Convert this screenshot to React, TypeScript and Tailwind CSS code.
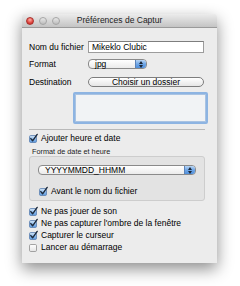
import React from "react";

const font = { fontFamily: '"Liberation Sans", Arial, sans-serif' };

function CheckBox({ checked }: { checked: boolean }) {
  return (
    <svg width="9" height="9" viewBox="0 0 9 9" className="shrink-0 overflow-visible">
      <defs>
        <linearGradient id="cbBlue" x1="0" y1="0" x2="0" y2="1">
          <stop offset="0" stopColor="#d4e6f8" />
          <stop offset="0.5" stopColor="#8fbbea" />
          <stop offset="1" stopColor="#5d9ae0" />
        </linearGradient>
        <linearGradient id="cbWhite" x1="0" y1="0" x2="0" y2="1">
          <stop offset="0" stopColor="#ffffff" />
          <stop offset="1" stopColor="#e4e4e4" />
        </linearGradient>
      </defs>
      <rect
        x="0.5"
        y="1.5"
        width="7"
        height="7"
        rx="1.2"
        fill={checked ? "url(#cbBlue)" : "url(#cbWhite)"}
        stroke={checked ? "#5a7fae" : "#8e8e8e"}
        strokeWidth="0.8"
      />
      {checked && (
        <path d="M1.8 4.6 L3.6 6.8 L8.2 0.4" fill="none" stroke="#1d2a3c" strokeWidth="1.4" strokeLinecap="round" strokeLinejoin="round" />
      )}
    </svg>
  );
}

function Stepper() {
  return (
    <div className="flex h-full w-[11px] shrink-0 flex-col items-center justify-center gap-[1px] rounded-r-[3px] border-l border-[#5b83b9] bg-gradient-to-b from-[#b9d5f3] via-[#6fa6e6] to-[#4f8fdc]">
      <svg width="4" height="3" viewBox="0 0 4 3">
        <path d="M0 3 L2 0 L4 3 Z" fill="#1a2637" />
      </svg>
      <svg width="4" height="3" viewBox="0 0 4 3">
        <path d="M0 0 L2 3 L4 0 Z" fill="#1a2637" />
      </svg>
    </div>
  );
}

function PopUp({ label, className }: { label: string; className: string }) {
  return (
    <div className={`flex items-stretch rounded-[4px] border border-[#8a8a8a] bg-gradient-to-b from-white to-[#ebebeb] ${className}`}>
      <span className="flex-1 whitespace-nowrap pl-[6px] text-[8.5px] leading-[8px] text-black">{label}</span>
      <Stepper />
    </div>
  );
}

function CheckRow({ checked, label, className = "" }: { checked: boolean; label: string; className?: string }) {
  return (
    <div className={`flex items-center gap-[3px] ${className}`}>
      <CheckBox checked={checked} />
      <span className="text-[8.5px] leading-none text-black">{label}</span>
    </div>
  );
}

export default function App() {
  return (
    <div className="h-[286px] w-[240px] bg-white pl-[22px] pt-[14px]" style={font}>
      <div className="flex h-[249px] w-[195px] flex-col overflow-hidden rounded-t-[4px] bg-[#ececec] shadow-[0_6px_16px_rgba(0,0,0,0.45)]">
        <div className="relative flex h-[14px] shrink-0 items-center border-b border-[#9a9a9a] bg-gradient-to-b from-[#ececec] to-[#c4c4c4]">
          <div className="flex items-center gap-[5px] pl-[4px]">
            <span className="h-[8px] w-[8px] rounded-full border border-[#a8302c] bg-[radial-gradient(circle_at_50%_30%,#ffb0a8,#e0443e_60%,#b52a25)]" />
            <span className="h-[8px] w-[8px] rounded-full border border-[#a5a5a5] bg-gradient-to-b from-[#e8e8e8] to-[#bdbdbd]" />
            <span className="h-[8px] w-[8px] rounded-full border border-[#a5a5a5] bg-gradient-to-b from-[#e8e8e8] to-[#bdbdbd]" />
          </div>
          <span className="absolute inset-x-0 text-center text-[8.5px] leading-none text-[#222]">Préférences de Captur</span>
        </div>

        <div className="flex flex-col px-[7px]">
          <div className="mt-[13px] flex h-[12px] items-center">
            <span className="w-[59px] text-[8.5px] leading-none text-black">Nom du fichier</span>
            <div className="flex h-[12px] w-[116px] items-center border border-[#9c9c9c] border-t-[#7e7e7e] bg-white pl-[3px] text-[8.5px] leading-none text-black">
              Mikeklo Clubic
            </div>
          </div>

          <div className="mt-[6px] flex h-[10px] items-center">
            <span className="w-[59px] text-[8.5px] leading-none text-black">Format</span>
            <PopUp label="jpg" className="h-[10px] w-[59px]" />
          </div>

          <div className="mt-[8px] flex h-[10px] items-center">
            <span className="w-[59px] text-[8.5px] leading-none text-black">Destination</span>
            <div className="flex h-[10px] w-[116px] items-center justify-center rounded-full border border-[#7d7d7d] bg-gradient-to-b from-white to-[#e6e6e6] text-[8.5px] leading-none text-black">
              Choisir un dossier
            </div>
          </div>

          <div className="ml-[44px] mt-[5px] h-[32px] w-[135px] rounded-[2px] border-2 border-[#8db4e2] bg-[#f1f3f5] shadow-[inset_0_0_0_1px_#a9c3e2]" />

          <div className="mt-[5px] h-px w-[176px] bg-[#b9b9b9]" />

          <CheckRow checked label="Ajouter heure et date" className="mt-[3px] h-[10px]" />

          <span className="mt-[4px] flex h-[9px] items-center pl-[3px] text-[7.3px] leading-none text-[#222]">Format de date et heure</span>

          <div className="flex h-[45px] w-[176px] flex-col rounded-[3px] border border-[#cdcdcd] bg-[#e3e3e3] px-[8px] pt-[8px]">
            <PopUp label="YYYYMMDD_HHMM" className="h-[10px] w-[158px]" />
            <CheckRow checked label="Avant le nom du fichier" className="ml-[1px] mt-[11px] h-[10px]" />
          </div>

          <div className="mt-[4px] flex flex-col">
            <CheckRow checked label="Ne pas jouer de son" className="h-[12px]" />
            <CheckRow checked label="Ne pas capturer l'ombre de la fenêtre" className="h-[12px]" />
            <CheckRow checked label="Capturer le curseur" className="h-[12px]" />
            <CheckRow checked={false} label="Lancer au démarrage" className="h-[12px]" />
          </div>
        </div>
      </div>
    </div>
  );
}
